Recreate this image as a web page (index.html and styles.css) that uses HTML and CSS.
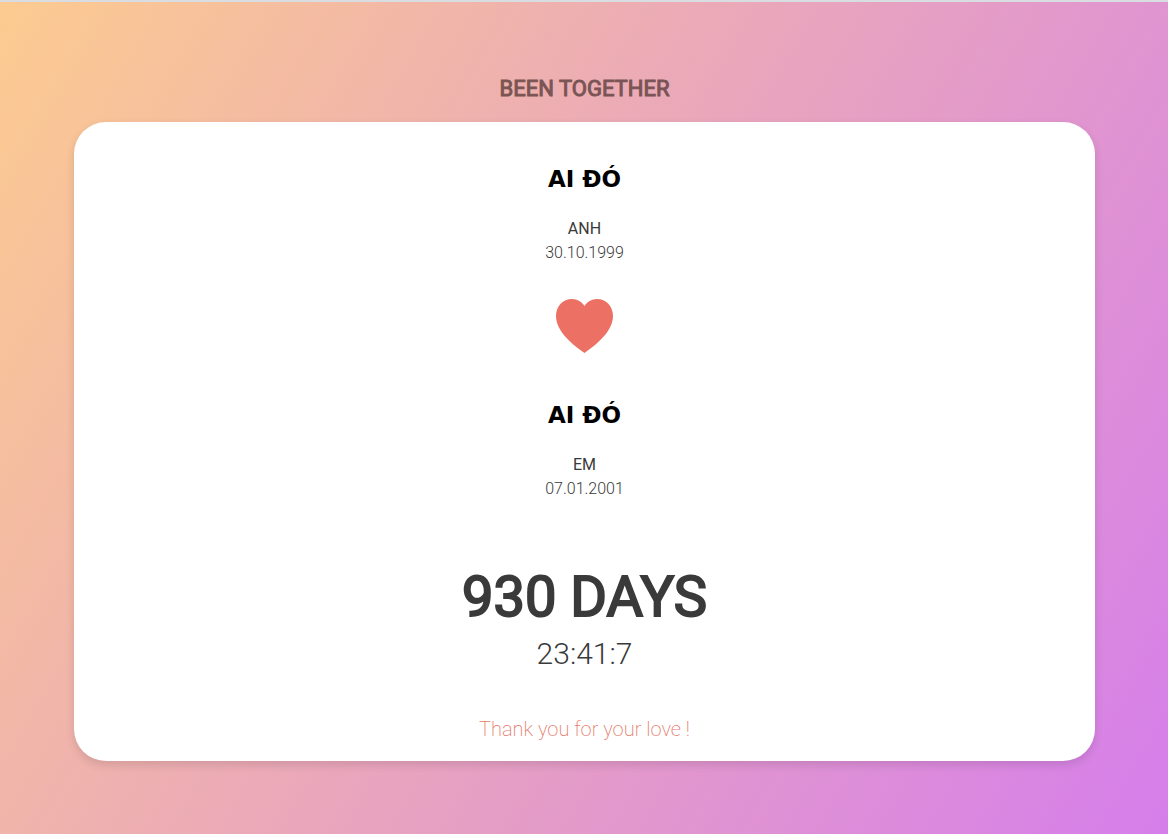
FILE: index.html
```html
<!DOCTYPE html>
<html lang="en">
<head>
<meta charset="utf-8">
<meta name="viewport" content="width=device-width, initial-scale=1">
<title>Been Together</title>
<link rel="stylesheet" href="styles.css">
</head>
<body>
<main class="page">
  <h1 class="title">BEEN TOGETHER</h1>
  <section class="card">
    <div class="person">
      <div class="avatar">AI ĐÓ</div>
      <h2 class="name">ANH</h2>
      <p class="date">30.10.1999</p>
    </div>
    <svg class="heart" viewBox="0 0 57 54" aria-hidden="true">
      <path d="M28.500 54C14 44 0 31 0 17C0 7 7 0 16 0C21.500 0 26 3 28.500 7C31 3 35.500 0 41 0C50 0 57 7 57 17C57 31 43 44 28.500 54Z"/>
    </svg>
    <div class="person">
      <div class="avatar">AI ĐÓ</div>
      <h2 class="name">EM</h2>
      <p class="date">07.01.2001</p>
    </div>
    <p class="days">930 DAYS</p>
    <p class="clock">23:41:7</p>
    <p class="thanks">Thank you for your love !</p>
  </section>
</main>
</body>
</html>
```
FILE: styles.css
```css
* {
  box-sizing: border-box;
}

body {
  margin: 0;
  background: #fff;
  color: #3a3a3a;
  font-family: Roboto, "Liberation Sans", sans-serif;
  font-size: 16px;
  line-height: 24px;
  text-align: center;
}

h1, h2, p {
  margin: 0;
}

.page {
  min-height: calc(100vh - 1px);
  padding: 71px 73px 73px 74px;
  border-top: 2px solid #d9dce1;
  background: linear-gradient(120deg, #fccb90 0%, #d57eeb 100%);
}

.title {
  margin-bottom: 17px;
  color: #4a2f2c;
  opacity: 0.7;
  font-size: 22px;
  font-weight: 400;
  line-height: 32px;
  -webkit-text-stroke: 1px currentColor;
}

.card {
  display: flex;
  flex-direction: column;
  align-items: center;
  padding: 41px 16px 20px;
  border-radius: 32px;
  background: #fff;
  box-shadow: 0 4px 10px rgba(0, 0, 0, 0.12);
}

.avatar {
  margin-bottom: 22px;
  color: #000;
  font-family: "DejaVu Sans", sans-serif;
  font-size: 23px;
  font-weight: 700;
  line-height: 32px;
}

.name {
  font-size: 16px;
  font-weight: 400;
}

.date {
  font-weight: 300;
}

.heart {
  width: 57px;
  height: 54px;
  margin: 34px 0 46px;
  fill: #ec7063;
}

.days {
  margin-top: 60px;
  font-size: 56px;
  font-weight: 400;
  line-height: 72px;
  -webkit-text-stroke: 2px currentColor;
}

.clock {
  font-size: 30px;
  font-weight: 300;
  line-height: 42px;
}

.thanks {
  margin-top: 42px;
  color: #e57868;
  font-size: 20px;
  font-weight: 200;
}
```
